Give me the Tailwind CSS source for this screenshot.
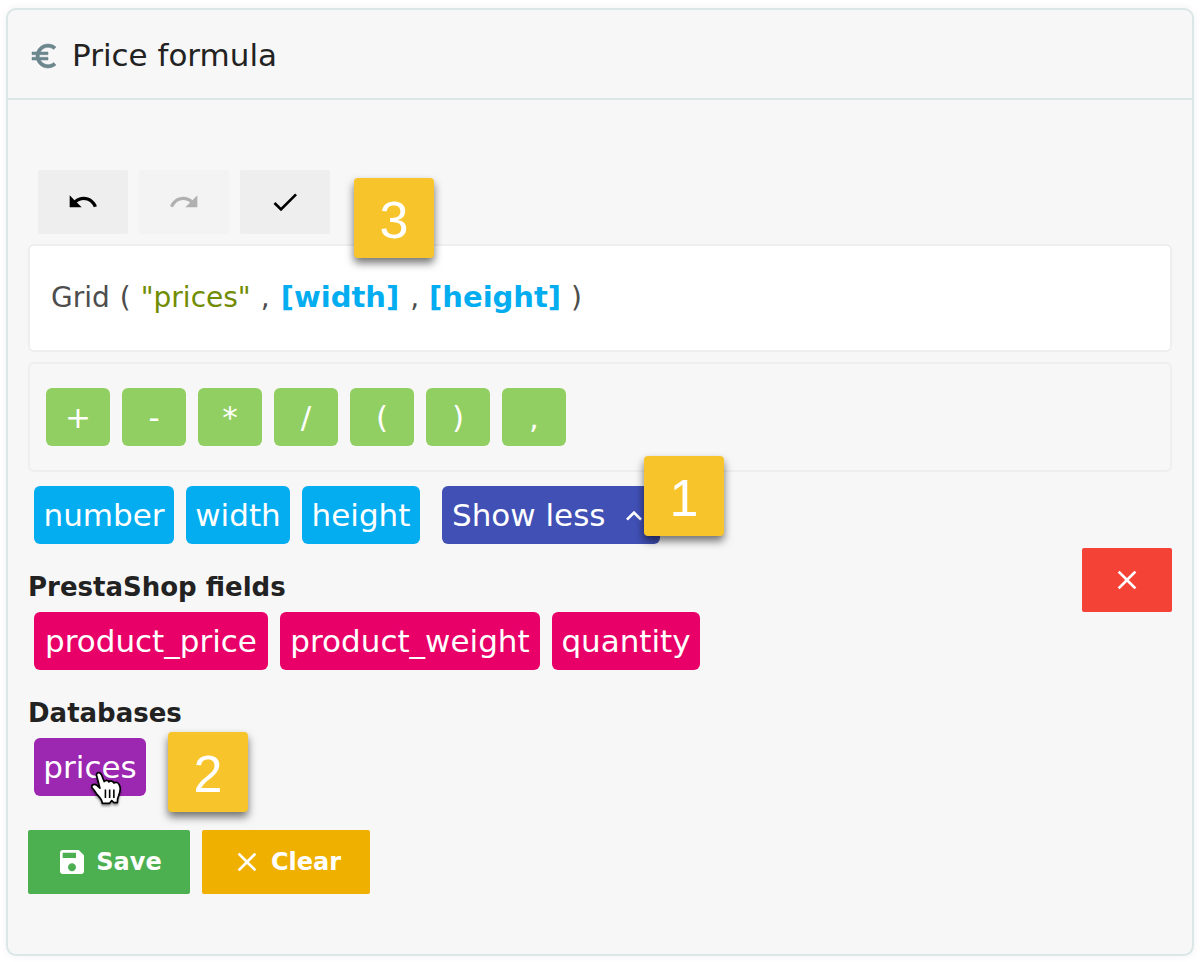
<!DOCTYPE html>
<html lang="en">
<head>
<meta charset="utf-8">
<title>Price formula</title>
<script src="https://cdn.jsdelivr.net/npm/@tailwindcss/browser@4"></script>
</head>
<body class="bg-white font-['Verdana','DejaVu_Sans',sans-serif] text-[#222]">
<main class="mt-2 mr-2 mb-1.5 ml-1.5">
<section class="rounded-[10px] border-2 border-[#dbe6e6] bg-[#f7f7f7] shadow-[0_0_8px_rgba(0,0,0,0.06)]">
  <header class="flex h-[90px] items-center gap-3 border-b-2 border-[#dbe6e6] px-5 pt-0.5">
    <svg class="mt-0.5 size-8 fill-[#6c868e] stroke-[#6c868e] stroke-[0.4]" viewBox="0 0 24 24" aria-hidden="true"><path d="M15 18.5c-2.51 0-4.68-1.42-5.76-3.5H15v-2H8.58c-.05-.33-.08-.66-.08-1s.03-.67.08-1H15V9H9.24C10.32 6.92 12.5 5.5 15 5.5c1.61 0 3.09.59 4.23 1.57L21 5.3C19.41 3.87 17.3 3 15 3c-3.92 0-7.24 2.51-8.48 6H3v2h3.06c-.04.33-.06.66-.06 1s.02.67.06 1H3v2h3.52c1.24 3.49 4.56 6 8.48 6 2.31 0 4.41-.87 6-2.3l-1.78-1.77c-1.13.98-2.6 1.57-4.22 1.57z"/></svg>
    <h1 class="text-[31px] leading-10">Price formula</h1>
  </header>

  <div class="px-5 pt-[70px] pb-[60px]">
    <div class="relative flex gap-[11px] px-2.5">
      <button type="button" aria-label="Undo" class="flex h-16 w-[90px] items-center justify-center rounded-xs bg-[#eee]">
        <svg class="size-8" viewBox="0 0 24 24"><path d="M12.5 8c-2.65 0-5.05.99-6.9 2.6L2 7v9h9l-3.62-3.62c1.39-1.16 3.16-1.88 5.12-1.88 3.54 0 6.55 2.31 7.6 5.5l2.37-.78C21.08 11.03 17.15 8 12.5 8z"/></svg>
      </button>
      <button type="button" aria-label="Redo" disabled class="flex h-16 w-[90px] items-center justify-center rounded-xs bg-[#f3f3f3]">
        <svg class="size-8 fill-[#b0b0b0]" viewBox="0 0 24 24"><path d="M18.4 10.6C16.55 8.99 14.15 8 11.5 8c-4.65 0-8.58 3.03-9.96 7.22L3.9 16c1.05-3.19 4.05-5.5 7.6-5.5 1.95 0 3.73.72 5.12 1.88L13 16h9V7l-3.6 3.6z"/></svg>
      </button>
      <button type="button" aria-label="Validate" class="flex h-16 w-[90px] items-center justify-center rounded-xs bg-[#eee]">
        <svg class="size-8" viewBox="0 0 24 24"><path d="M9 16.17L4.83 12l-1.42 1.41L9 19 21 7l-1.41-1.41z"/></svg>
      </button>
      <div class="absolute top-2 left-[326px] z-10 flex size-20 items-center justify-center rounded-sm bg-[#f7c52b] pt-1 font-['Liberation_Sans',sans-serif] text-[52px] leading-none text-white shadow-[0_5px_9px_rgba(0,0,0,0.55)]">3</div>
    </div>

    <div role="textbox" aria-label="Formula" tabindex="0" class="mt-2.5 flex h-[108px] items-center gap-2.5 rounded-md border-2 border-[#eee] bg-white px-[21px] text-[28px] text-[#4d4d4d]">
      <span>Grid</span><span>(</span><span class="text-[#718c00]">"prices"</span><span>,</span><b class="mx-px text-[29px] text-[#03adf0]">[width]</b><span>,</span><b class="text-[29px] text-[#03adf0]">[height]</b><span>)</span>
    </div>

    <div class="mt-2.5 flex gap-3 rounded-md border-2 border-[#eee] px-4 py-6 text-[31px] text-white">
      <button type="button" class="h-[58px] w-16 rounded-md bg-[#92cf62]">+</button>
      <button type="button" class="h-[58px] w-16 rounded-md bg-[#92cf62]">-</button>
      <button type="button" class="h-[58px] w-16 rounded-md bg-[#92cf62]">*</button>
      <button type="button" class="h-[58px] w-16 rounded-md bg-[#92cf62]">/</button>
      <button type="button" class="h-[58px] w-16 rounded-md bg-[#92cf62]">(</button>
      <button type="button" class="h-[58px] w-16 rounded-md bg-[#92cf62]">)</button>
      <button type="button" class="h-[58px] w-16 rounded-md bg-[#92cf62]">,</button>
    </div>

    <div class="mt-3.5 flex gap-3 px-1.5 text-[31px] text-white">
      <button type="button" class="h-[58px] w-[140px] rounded-md bg-[#03adf0]">number</button>
      <button type="button" class="h-[58px] w-[104px] rounded-md bg-[#03adf0]">width</button>
      <button type="button" class="h-[58px] w-[118px] rounded-md bg-[#03adf0]">height</button>
      <div class="relative ml-2.5">
        <button type="button" aria-expanded="true" class="flex h-[58px] w-[218px] items-center justify-between rounded-md bg-[#4050b5] px-2.5">Show less
          <svg class="mt-0.5 size-8 fill-white" viewBox="0 0 24 24"><path d="M12 8l-6 6 1.41 1.41L12 10.83l4.59 4.58L18 14z"/></svg>
        </button>
        <div class="absolute -top-[30px] -right-16 z-10 flex size-20 items-center justify-center rounded-sm bg-[#f7c52b] pt-1 font-['Liberation_Sans',sans-serif] text-[52px] leading-none text-white shadow-[0_5px_9px_rgba(0,0,0,0.55)]">1</div>
      </div>
    </div>

    <div class="flex items-start justify-between">
      <div>
        <h2 class="mt-7 text-[26px] leading-[30px] font-bold">PrestaShop fields</h2>
        <div class="mt-2.5 flex gap-3 px-1.5 text-[31px] text-white">
          <button type="button" class="h-[58px] w-[234px] rounded-md bg-[#e80068]">product_price</button>
          <button type="button" class="h-[58px] w-[260px] rounded-md bg-[#e80068]">product_weight</button>
          <button type="button" class="h-[58px] w-[148px] rounded-md bg-[#e80068]">quantity</button>
        </div>
        <h2 class="mt-7 text-[26px] leading-[30px] font-bold">Databases</h2>
        <div class="mt-2.5 flex px-1.5">
          <div class="relative">
            <button type="button" class="h-[58px] w-[112px] rounded-md bg-[#9c27b0] text-[31px] text-white">prices</button>
            <svg class="absolute top-[33px] left-[56px] h-[38px] w-[34px] drop-shadow-[0_2px_1px_rgba(0,0,0,0.4)]" viewBox="0 0 32 36" aria-hidden="true">
              <path d="M6.3 5C5 1.5 9.3.2 10.8 3.6L13.3 10C14.5 8.3 17 8.6 17.8 10.3C19.3 8.8 21.8 9.4 22.5 11.3C24.5 10.2 26.6 10.8 27.5 13C29.5 16 28.4 20 27 23.5C26 25.6 25.8 27 25.8 30H22.5L20.5 28L18.5 30.6H11.5C11.5 26.5 8 24.5 6 21.5C4.5 19 3.5 17.5 1.7 15.6C.8 13 4.2 11.8 6.2 13.4L9.3 16.2Z" fill="#fff" stroke="#000" stroke-width="1.6" stroke-linejoin="round"/>
              <path d="M14.5 17.5v8M18.5 17.5v8M22.5 17.5v8" stroke="#000" stroke-width="1.5"/>
            </svg>
            <div class="absolute -top-1.5 left-[134px] z-10 flex size-20 items-center justify-center rounded-sm bg-[#f7c52b] pt-1 font-['Liberation_Sans',sans-serif] text-[52px] leading-none text-white shadow-[0_5px_9px_rgba(0,0,0,0.55)]">2</div>
          </div>
        </div>
      </div>
      <button type="button" aria-label="Delete" class="mt-1 flex h-16 w-[90px] items-center justify-center rounded-xs bg-[#f44336]">
        <svg class="size-8 fill-white" viewBox="0 0 24 24"><path d="M19 6.41L17.59 5 12 10.59 6.41 5 5 6.41 10.59 12 5 17.59 6.41 19 12 13.41 17.59 19 19 17.59 13.41 12z"/></svg>
      </button>
    </div>

    <div class="mt-[34px] flex gap-3 text-2xl font-bold text-white">
      <button type="button" class="flex h-16 w-[162px] items-center justify-center gap-2 rounded-xs bg-[#4caf50]">
        <svg class="size-8 fill-white" viewBox="0 0 24 24"><path d="M17 3H5c-1.11 0-2 .9-2 2v14c0 1.1.89 2 2 2h14c1.1 0 2-.9 2-2V7l-4-4zm-5 16c-1.66 0-3-1.34-3-3s1.34-3 3-3 3 1.34 3 3-1.34 3-3 3zm3-10H5V5h10v4z"/></svg>
        Save</button>
      <button type="button" class="flex h-16 w-[168px] items-center justify-center gap-2 rounded-xs bg-[#f0b000]">
        <svg class="size-8 fill-white" viewBox="0 0 24 24"><path d="M19 6.41L17.59 5 12 10.59 6.41 5 5 6.41 10.59 12 5 17.59 6.41 19 12 13.41 17.59 19 19 17.59 13.41 12z"/></svg>
        Clear</button>
    </div>
  </div>
</section>
</main>
</body>
</html>
